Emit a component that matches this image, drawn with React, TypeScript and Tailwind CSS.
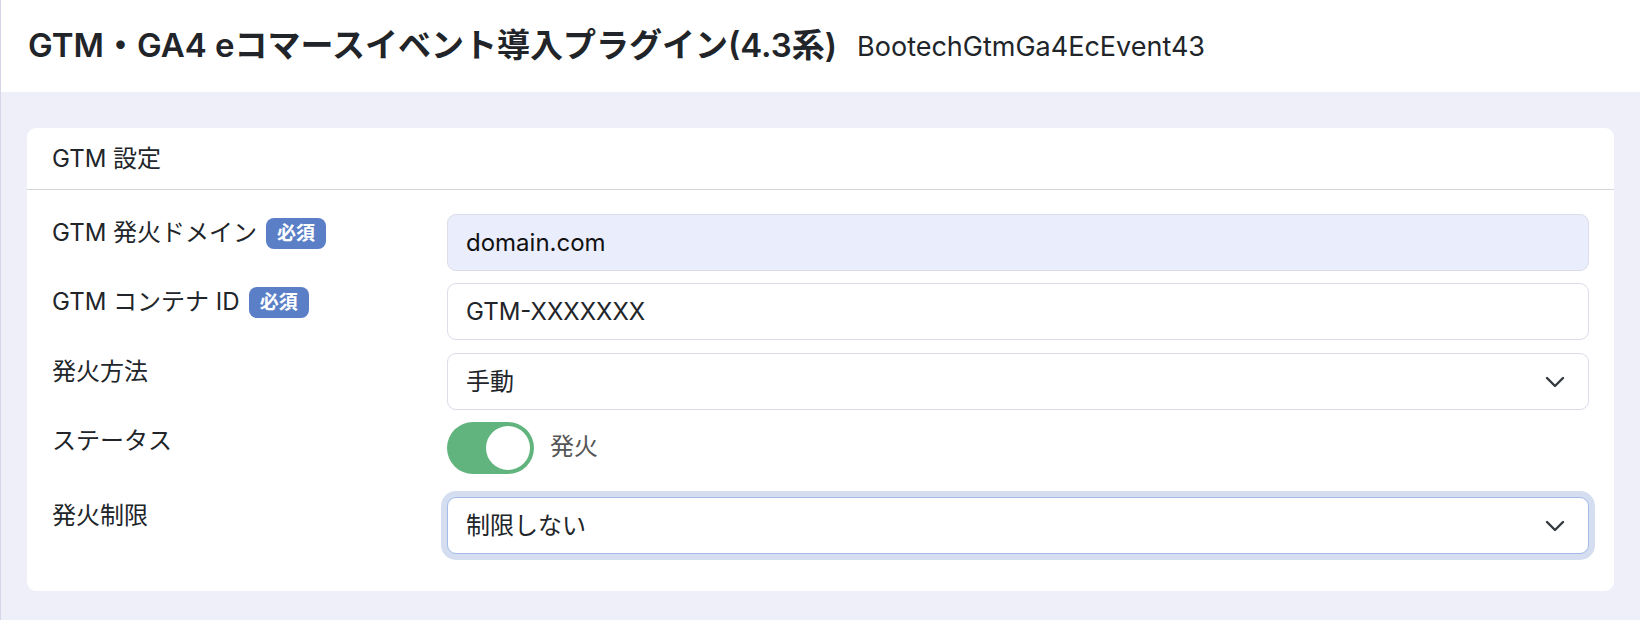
import React, { useState } from 'react';

const FONT = "font-['Inter','Noto_Sans_CJK_JP',sans-serif]";

function Badge() {
  return (
    <span className="ml-[9px] inline-flex h-[31px] w-[60px] items-center justify-center rounded-[8px] bg-[#5b7fc7] text-[19px] font-bold leading-none text-white">
      必須
    </span>
  );
}

function Chevron() {
  return (
    <svg width="20" height="12" viewBox="0 0 20 12" fill="none" className="shrink-0">
      <path d="M2 2l8 8 8-8" stroke="#343a40" strokeWidth="2.4" strokeLinecap="round" strokeLinejoin="round" />
    </svg>
  );
}

function Label({ children }: { children: React.ReactNode }) {
  return (
    <div className="flex items-center self-start pt-[1px] text-[24px] leading-[36px] text-[#212529]">{children}</div>
  );
}

export default function App() {
  const [domain, setDomain] = useState('domain.com');
  const [containerId, setContainerId] = useState('GTM-XXXXXXX');
  const [active, setActive] = useState(true);

  return (
    <div className={`min-h-screen border-l border-[#d6d6ea] bg-[#eeeff8] ${FONT}`}>
      <header className="flex h-[92px] items-center gap-[20px] bg-white px-[27px]">
        <h1 className="text-[33px] font-semibold text-[#212529]">
          GTM・GA4 eコマースイベント導入プラグイン(4.3系)
        </h1>
        <span className="pt-[2px] text-[27px] text-[#212529]">BootechGtmGa4EcEvent43</span>
      </header>

      <main className="px-[26px] pt-[36px] pb-[28px]">
        <section className="rounded-[9px] bg-white">
          <div className="flex h-[62px] items-center border-b border-[#d5d5dc] px-[25px] text-[24px] text-[#212529]">
            GTM 設定
          </div>

          <div className="grid grid-cols-[395px_1fr] px-[25px] pt-[24px] pb-[37px]">
            <Label>
              GTM 発火ドメイン
              <Badge />
            </Label>
            <input
              value={domain}
              onChange={(e) => setDomain(e.target.value)}
              className="mb-[12px] h-[57px] rounded-[9px] border border-[#dcdcea] bg-[#eaeefc] px-[18px] text-[24px] text-[#111] outline-none"
            />

            <Label>
              GTM コンテナ ID
              <Badge />
            </Label>
            <input
              value={containerId}
              onChange={(e) => setContainerId(e.target.value)}
              className="mb-[13px] h-[57px] rounded-[9px] border border-[#dcdcea] bg-white px-[18px] text-[24px] text-[#212529] outline-none"
            />

            <Label>発火方法</Label>
            <div className="mb-[12px] flex h-[57px] items-center justify-between rounded-[9px] border border-[#dcdcea] bg-white pl-[18px] pr-[23px] text-[24px] text-[#212529]">
              <span>手動</span>
              <Chevron />
            </div>

            <Label>ステータス</Label>
            <div className="mb-[12px] flex h-[63px] items-start">
              <button
                onClick={() => setActive(!active)}
                className={`flex h-[52px] w-[87px] items-center rounded-full p-[4px] ${
                  active ? 'justify-end bg-[#62b47f]' : 'justify-start bg-[#d5d5dc]'
                }`}
              >
                <span className="h-[44px] w-[44px] rounded-full bg-white" />
              </button>
              <span className="ml-[16px] mt-[7px] text-[24px] leading-[36px] text-[#555]">発火</span>
            </div>

            <Label>発火制限</Label>
            <div className="flex h-[57px] items-center justify-between rounded-[9px] border border-[#a3bbe8] bg-white pl-[18px] pr-[23px] text-[24px] text-[#212529] shadow-[0_0_0_6px_#d5ddf0]">
              <span>制限しない</span>
              <Chevron />
            </div>
          </div>
        </section>
      </main>
    </div>
  );
}
